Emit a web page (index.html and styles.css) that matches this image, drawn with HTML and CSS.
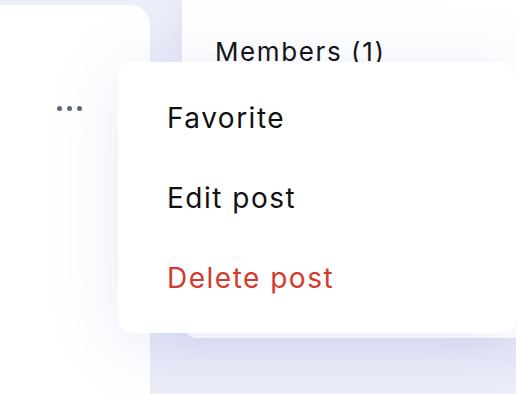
FILE: index.html
```html
<!DOCTYPE html>
<html>
<head>
<meta charset="utf-8">
<link rel="stylesheet" href="styles.css">
</head>
<body>
<div class="stage">
  <div class="post-card">
    <button class="more" aria-label="More options">
      <span class="dot"></span><span class="dot"></span><span class="dot"></span>
    </button>
  </div>
  <div class="side-card">
    <h2 class="members">Members (1)</h2>
  </div>
  <ul class="menu">
    <li class="menu-item">Favorite</li>
    <li class="menu-item">Edit post</li>
    <li class="menu-item danger">Delete post</li>
  </ul>
</div>
</body>
</html>
```
FILE: styles.css
```css
* { box-sizing: border-box; }
html, body {
  margin: 0;
  padding: 0;
  width: 516px;
  height: 394px;
  overflow: hidden;
  background: linear-gradient(180deg, #eceef9 0%, #e2e5f5 80%, #eceef8 100%);
  font-family: "Inter", "Liberation Sans", sans-serif;
}
.stage {
  position: relative;
  display: flex;
  align-items: flex-start;
  gap: 32px;
  height: 394px;
}
.post-card {
  width: 150px;
  height: 389px;
  margin-top: 5px;
  background: #fff;
  border-top-right-radius: 20px;
  display: flex;
  justify-content: flex-end;
  align-items: flex-start;
  padding: 101px 68px 0 0;
}
.more {
  border: 0;
  background: none;
  padding: 0;
  height: 5px;
  display: flex;
  gap: 5px;
}
.dot {
  width: 5px;
  height: 5px;
  border-radius: 50%;
  background: #5f6676;
}
.side-card {
  flex: 1;
  height: 338px;
  background: #fff;
  border-bottom-left-radius: 16px;
  padding: 37px 0 0 33px;
  box-shadow: 0 0 30px rgba(150, 160, 220, 0.12);
}
.members {
  margin: 0;
  font-weight: 400;
  font-size: 26px;
  line-height: 30px;
  letter-spacing: 1.6px;
  color: #111;
}
.menu {
  position: absolute;
  left: 118px;
  top: 62px;
  width: 398px;
  height: 271px;
  margin: 0;
  padding: 16px 0 15px 49px;
  list-style: none;
  background: #fff;
  border-radius: 14px;
  box-shadow: 0 10px 70px rgba(120, 130, 210, 0.16);
}
.menu-item {
  height: 80px;
  line-height: 81px;
  font-size: 28px;
  letter-spacing: 1.5px;
  color: #111;
}
.menu-item.danger {
  color: #d23a2f;
}
```
